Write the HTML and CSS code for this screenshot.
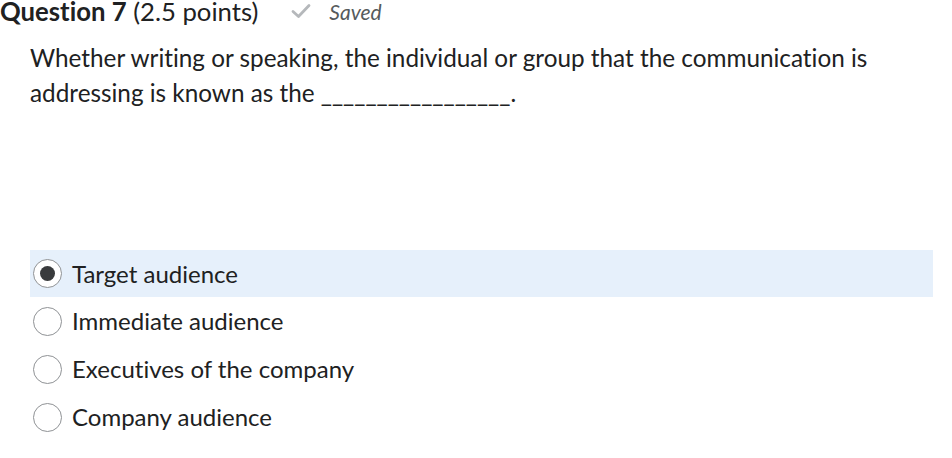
FILE: index.html
```html
<!DOCTYPE html>
<html>
<head>
<meta charset="utf-8">
<link rel="stylesheet" href="styles.css">
</head>
<body>
<div class="page">
  <div class="header">
    <h2 class="qtitle"><strong>Question 7</strong> <span class="pts">(2.5 points)</span></h2>
    <span class="saved">
      <svg class="check" width="20" height="16" viewBox="0 0 20 16"><path d="M2 8.5 L7.5 13.5 L18 2.5" fill="none" stroke="#b5b8bb" stroke-width="2.8" stroke-linecap="round" stroke-linejoin="round"/></svg>
      <em>Saved</em>
    </span>
  </div>
  <p class="prompt">Whether writing or speaking, the individual or group that the communication is addressing is known as the _________________.</p>
  <div class="options">
    <label class="opt selected"><span class="radio"><span class="dot"></span></span><span class="lbl">Target audience</span></label>
    <label class="opt"><span class="radio"></span><span class="lbl">Immediate audience</span></label>
    <label class="opt"><span class="radio"></span><span class="lbl">Executives of the company</span></label>
    <label class="opt"><span class="radio"></span><span class="lbl">Company audience</span></label>
  </div>
</div>
</body>
</html>
```
FILE: styles.css
```css
* { box-sizing: border-box; }
html, body { margin: 0; padding: 0; background: #fff; }
body { font-family: Lato, "Noto Sans", sans-serif; color: #202122; font-variant-ligatures: none; }
.page { width: 952px; height: 458px; overflow: hidden; }
.header { display: flex; align-items: center; height: 22px; }
.qtitle { margin: 0; font-size: 25.7px; font-weight: 400; color: #202122; line-height: 22px; }
.qtitle strong { font-weight: 700; }
.saved { display: flex; align-items: center; margin-left: 33px; color: #565a5c; font-size: 21px; }
.check { margin-right: 18px; }
.saved em { font-style: italic; }
.prompt { margin: 18px 0 0 30px; width: 880px; font-size: 24.3px; line-height: 35px; color: #202122; }
.options { margin-top: 140px; margin-left: 30px; width: 903px; display: flex; flex-direction: column; }
.opt { display: flex; align-items: center; height: 48px; font-size: 24px; color: #202122; padding-left: 3px; }
.opt.selected { background: #e6f0fb; height: 47px; }
.radio { width: 29px; height: 29px; border-radius: 50%; border: 1.3px solid #8f9295; background: #fff; display: flex; align-items: center; justify-content: center; margin-right: 10px; flex: none; }
.dot { width: 15px; height: 15px; border-radius: 50%; background: #393b3d; }
.lbl { line-height: 24px; }
```
